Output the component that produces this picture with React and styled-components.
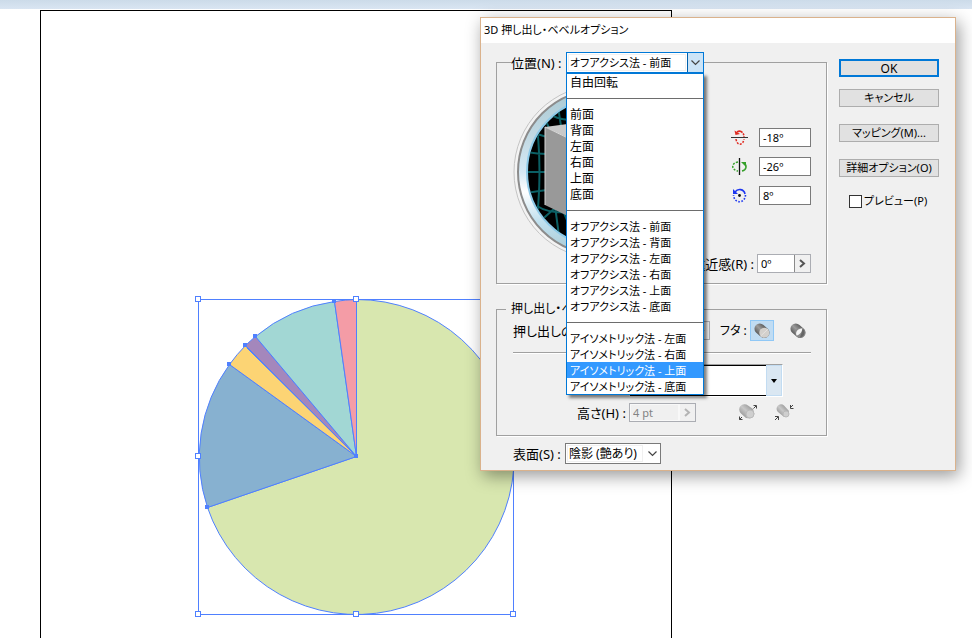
import { useState } from 'react'
import styled, { createGlobalStyle } from 'styled-components'

const GlobalStyle = createGlobalStyle`
    * {
        box-sizing: border-box;
    }
    body {
        margin: 0;
        background: #fff;
        color: #000;
        font-family: "Noto Sans", "Noto Sans CJK JP", sans-serif;
        font-size: 12px;
        line-height: 16px;
        font-feature-settings: "palt";
    }
    button, input, select {
        font: inherit;
        font-feature-settings: inherit;
        color: inherit;
        margin: 0;
    }
`

const Workspace = styled.main`
    position: relative;
    display: flex;
    flex-direction: column;
    height: 100vh;
    min-height: 480px;
    overflow: hidden;
`

const AppBar = styled.div`
    flex: none;
    height: 9px;
    background: linear-gradient(#ccdbe9, #d9e5f2);
`

const Artboard = styled.section`
    flex: 1;
    margin: 1px 300px 0 40px;
    border: 1px solid #000;
    border-bottom: none;
`

const PieChart = styled.svg`
    position: absolute;
    left: 192px;
    top: 293px;
`

const Dialog = styled.section`
    position: absolute;
    left: 480px;
    right: 16px;
    top: 17px;
    min-width: 476px;
    background: #f0f0f0;
    border: 1px solid #dab28c;
    box-shadow: 3px 5px 16px rgba(0, 0, 0, 0.4);
`

const TitleBar = styled.h1`
    height: 25px;
    margin: 0;
    padding: 0 3px;
    background: #fff;
    font-size: 11px;
    font-weight: 400;
    line-height: 23px;
`

const DialogBody = styled.form`
    display: flex;
    gap: 12px;
    padding: 9px 16px 6px 15px;
`

const Settings = styled.div`
    flex: 1;
    min-width: 0;
`

const Group = styled.fieldset`
    min-width: 0;
    margin: 0 0 ${({ $gap }) => $gap}px;
    padding: ${({ $top }) => $top}px 15px ${({ $bottom }) => $bottom}px 16px;
    border: 1px solid #a0a0a0;
    box-shadow: 1px 1px 0 #fff;
`

const GroupLegend = styled.legend`
    display: flex;
    align-items: center;
    height: ${({ $height }) => $height}px;
    margin-left: -${({ $inset }) => $inset}px;
    padding: 0 0 0 ${({ $inset }) => $inset - 2}px;
    background: #f0f0f0;
`

const Label = styled.label`
    flex: none;
    width: ${({ $width }) => ($width ? `${$width}px` : 'auto')};
    font-size: 13px;
    white-space: nowrap;
`

const Combo = styled.div`
    position: relative;
    width: ${({ $width }) => $width}px;
`

const SelectBox = styled.div`
    display: flex;
    height: 21px;
    background: #fff;
    border: 1px solid ${({ $open }) => ($open ? '#0078d7' : '#7a7a7a')};
`

const Select = styled.select`
    flex: 1;
    min-width: 0;
    padding: 0 2px;
    border: 1px solid #fff;
    background: #fff;
    box-shadow: inset 0 0 0 1px #f0f0f0;
    appearance: none;
    outline: none;
    font-size: ${({ $small }) => ($small ? 11 : 12)}px;
    line-height: 16px;
`

const SelectArrow = styled.span`
    display: flex;
    align-items: center;
    justify-content: center;
    width: 16px;
    color: #444;
    background: ${({ $open }) => ($open ? '#cce4f7' : '#fff')};
    border-left: 1px solid ${({ $open }) => ($open ? '#0060ac' : '#fff')};
`

const Menu = styled.ul`
    position: absolute;
    z-index: 2;
    top: 100%;
    left: 0;
    right: 0;
    margin: 0;
    padding: 0;
    list-style: none;
    background: #fff;
    border: 1px solid #0078d7;
    box-shadow: 3px 3px 3px rgba(0, 0, 0, 0.5);
`

const MenuItem = styled.li`
    height: 16px;
    padding: 0 3px;
    font-size: ${({ $small }) => ($small ? 11 : 12)}px;
    line-height: 18px;
    white-space: nowrap;
    cursor: default;
    color: ${({ $active }) => ($active ? '#fff' : '#000')};
    background: ${({ $active }) => ($active ? '#3399ff' : 'transparent')};
`

const MenuSeparator = styled.li`
    height: 1px;
    margin: 8px 0 7px;
    background: #6d6d6d;
`

const RotationArea = styled.div`
    display: flex;
    justify-content: space-between;
`

const RotationFields = styled.div`
    display: flex;
    flex-direction: column;
    align-items: flex-end;
    gap: 10px;
    padding-top: 44px;
`

const FieldRow = styled.div`
    display: flex;
    align-items: center;
    gap: ${({ $gap }) => $gap || 0}px;
    margin-top: ${({ $top }) => $top || 0}px;
    padding-left: ${({ $indent }) => $indent || 0}px;
`

const AngleLabel = styled.label`
    display: flex;
    align-items: center;
    gap: 11px;
`

const AngleInput = styled.input`
    width: 52px;
    height: 19px;
    padding: 0 3px;
    border: 1px solid #7a7a7a;
    background: #fff;
    font-size: 11px;
`

const Stepper = styled.div`
    display: flex;
    width: ${({ $width }) => $width}px;
    height: 19px;
    border: 1px solid #abadb3;
    color: ${({ $muted }) => ($muted ? '#838383' : '#000')};
`

const StepperInput = styled.input`
    flex: 1;
    min-width: 0;
    padding: 0 3px;
    border: none;
    background: #fff;
    font-size: 11px;
    &:disabled {
        background: #f0f0f0;
        box-shadow: inset 0 0 0 1px #f8f8f8;
    }
`

const StepperButton = styled.button`
    display: flex;
    align-items: center;
    justify-content: center;
    width: 16px;
    padding: 0;
    border: none;
    border-left: 1px solid #8a8a8a;
    background: #f0f0f0;
    color: #555;
    &:disabled {
        border-color: #f8f8f8;
        color: #b4b4b4;
    }
`

const Divider = styled.hr`
    height: 2px;
    margin: 11px 0 10px;
    border: none;
    border-top: 1px solid #a0a0a0;
    background: #fff;
`

const CapGroup = styled.div`
    display: flex;
    align-items: center;
    gap: 12px;
    padding-left: 10px;
`

const CapLabel = styled.span`
    width: 28px;
    margin-right: -10px;
    white-space: nowrap;
`

const CapButton = styled.button`
    display: flex;
    align-items: center;
    justify-content: center;
    width: 24px;
    height: 21px;
    padding: 0;
    border: 1px solid ${({ $pressed }) => ($pressed ? '#90c8f6' : 'transparent')};
    background: ${({ $pressed }) => ($pressed ? '#c0dcf3' : 'transparent')};
`

const BevelPicker = styled.button`
    display: flex;
    width: 154px;
    height: 33px;
    padding: 0;
    border: 1px solid #fff;
    border-top-color: #a0a0a0;
    background: #f0f0f0;
`

const BevelSample = styled.span`
    flex: 1;
    align-self: stretch;
    background: #fff;
    border: 1px solid #000;
    border-right: none;
`

const BevelArrow = styled.span`
    display: flex;
    align-items: center;
    justify-content: center;
    align-self: stretch;
    width: 16px;
    background: #dae7f2;
    border: 1px solid #c2dcf2;
`

const Actions = styled.div`
    flex: none;
    display: flex;
    flex-direction: column;
    width: 100px;
    padding-top: 7px;
    font-size: 11px;
`

const ActionButton = styled.button`
    height: 18px;
    margin-bottom: ${({ $gap }) => $gap}px;
    padding: 0;
    border: ${({ $primary }) => ($primary ? '2px solid #0078d7' : '1px solid #adadad')};
    background: #e1e1e1;
    font-size: ${({ $primary }) => ($primary ? 12 : 11)}px;
    line-height: 16px;
    white-space: nowrap;
`

const PreviewOption = styled.label`
    display: flex;
    align-items: center;
    gap: 2px;
    padding-left: 10px;
    white-space: nowrap;
`

const Checkbox = styled.input`
    appearance: none;
    width: 13px;
    height: 13px;
    border: 1px solid #333;
    background: #fff;
    &:checked {
        background: #0078d7;
    }
`

const positions = [
    ['自由回転'],
    ['前面', '背面', '左面', '右面', '上面', '底面'],
    [
        'オフアクシス法 - 前面',
        'オフアクシス法 - 背面',
        'オフアクシス法 - 左面',
        'オフアクシス法 - 右面',
        'オフアクシス法 - 上面',
        'オフアクシス法 - 底面',
    ],
    [
        'アイソメトリック法 - 左面',
        'アイソメトリック法 - 右面',
        'アイソメトリック法 - 上面',
        'アイソメトリック法 - 底面',
    ],
]

const slices = [
    { color: '#d8e7af', from: [164.5, 6.5], to: [15.5, 214.5], large: 1 },
    { color: '#87b1d0', from: [15.5, 214.5], to: [37.5, 71.5], large: 0 },
    { color: '#fcd474', from: [37.5, 71.5], to: [53.5, 52.5], large: 0 },
    { color: '#a487bc', from: [53.5, 52.5], to: [63.5, 43.5], large: 0 },
    { color: '#a2d7d4', from: [63.5, 43.5], to: [142.5, 8.5], large: 0 },
    { color: '#f49ca6', from: [142.5, 8.5], to: [164.5, 6.5], large: 0 },
]

const handles = [
    [6.5, 6.5], [164.5, 6.5], [6.5, 163.5],
    [6.5, 321.5], [164.5, 321.5], [321.5, 321.5],
]

function Pie() {
    return (
        <PieChart width="328" height="328" viewBox="0 0 328 328" role="img" aria-label="円グラフ">
            <g stroke="#4f80ff" strokeWidth="1">
                {slices.map(({ color, from, to, large }) => (
                    <path
                        key={color}
                        fill={color}
                        d={`M164.5 163.5L${from[0]} ${from[1]}A157.5 157.5 0 ${large} 1 ${to[0]} ${to[1]}Z`}
                    />
                ))}
                <path d="M54.5 54.5L164.5 163.5" />
                <rect x="6.5" y="6.5" width="315" height="315" fill="none" />
            </g>
            {slices.map(({ color, to }) => (
                <rect key={color} x={to[0] - 2.5} y={to[1] - 2.5} width="4" height="4" fill="#4f80ff" />
            ))}
            <rect x="162" y="161" width="4" height="4" fill="#4f80ff" />
            {handles.map(([x, y]) => (
                <rect key={`${x}-${y}`} x={x - 3} y={y - 3} width="5" height="5" fill="#fff" stroke="#4f80ff" />
            ))}
        </PieChart>
    )
}

function TrackCube() {
    return (
        <svg width="176" height="176" viewBox="0 0 176 176" aria-hidden="true">
            <defs>
                <linearGradient id="ring" x1="0" y1="0" x2="0" y2="1">
                    <stop offset="0" stopColor="#a9c9d3" />
                    <stop offset="0.3" stopColor="#c3dae4" />
                    <stop offset="0.5" stopColor="#d5e8f4" />
                    <stop offset="0.62" stopColor="#ffffff" />
                    <stop offset="0.8" stopColor="#c0e0ee" />
                    <stop offset="1" stopColor="#a9c9d3" />
                </linearGradient>
                <clipPath id="globe"><circle cx="88" cy="88" r="73" /></clipPath>
            </defs>
            <circle cx="88" cy="88" r="87" fill="#f3f3f3" stroke="#c4c4c4" />
            <circle cx="88" cy="88" r="83" fill="url(#ring)" stroke="#8c8c8c" strokeWidth="2" />
            <circle cx="88" cy="88" r="74" fill="#000" stroke="#8ecae8" strokeWidth="2" />
            <g clipPath="url(#globe)" fill="none" stroke="#0b5f64" strokeWidth="2">
                <path d="M22 26Q31 88 22 150M14 88H162M14 68Q24 70 34 70M14 109Q24 107 34 106" />
                <path d="M24 50L34 53M24 122Q36 130 60 128M24 140L42 124M46 152L42 122M60 150L48 122" />
                <path d="M30 30L36 44M40 32Q48 36 60 36M44 16L48 42M56 14L54 42" />
                <path d="M88 14V162M104 14Q120 88 104 162M130 20Q150 88 130 156" />
            </g>
            <path d="M32 43L92 35L146 52L88 70Z" fill="#c9c9c9" />
            <path d="M32 43L88 70V148L32 121Z" fill="#999" />
            <path d="M88 70L146 52V128L88 148Z" fill="#777" />
            <path d="M32 121V43L88 70" fill="none" stroke="#d8d8d8" />
        </svg>
    )
}

function RotateIcon({ axis }) {
    if (axis === 'x') {
        return (
            <svg width="17" height="19" viewBox="0 0 17 19" fill="none" aria-hidden="true">
                <path d="M6 4C9 2 13 4 13 9" stroke="#e02a20" strokeWidth="1.6" strokeDasharray="6 1 2 1" />
                <path d="M3.500 2.500L4.500 7L9 6Z" fill="#e02a20" />
                <path d="M5 11C6 18 12 18 13 11" stroke="#e02a20" strokeWidth="1.5" strokeDasharray="2 1.4" />
                <path d="M0 9.5H17" stroke="#333" />
            </svg>
        )
    }
    if (axis === 'y') {
        return (
            <svg width="17" height="19" viewBox="0 0 17 19" fill="none" aria-hidden="true">
                <path d="M11 14C16 13 16 8 13 6" stroke="#35a02a" strokeWidth="1.5" />
                <path d="M10 5H15V10Z" fill="#35a02a" />
                <path d="M7 5C0 6 0 13 7 14" stroke="#35a02a" strokeWidth="1.5" strokeDasharray="2 1.4" />
                <path d="M8.5 1V18" stroke="#111" strokeWidth="1.3" />
            </svg>
        )
    }
    return (
        <svg width="17" height="19" viewBox="0 0 17 19" fill="none" aria-hidden="true">
            <path d="M4 6C7 2 13 3 14 8" stroke="#1c36f0" strokeWidth="1.6" />
            <path d="M2 3V8H7Z" fill="#1c36f0" />
            <path d="M14.500 9C14 18 3 18 2.500 9" stroke="#1c36f0" strokeWidth="1.6" strokeDasharray="1.6 1.6" />
            <circle cx="8.500" cy="9.500" r="1.400" fill="#111" />
        </svg>
    )
}

function CapIcon({ hollow }) {
    const id = hollow ? 'cap-hollow' : 'cap-solid'
    return (
        <svg width="16" height="16" viewBox="0 0 16 16" aria-hidden="true">
            <defs>
                <linearGradient id={id} x1="0" y1="1" x2="1" y2="0">
                    <stop offset="0.1" stopColor="#3c3c3c" />
                    <stop offset="0.5" stopColor="#9c9c9c" />
                    <stop offset="0.9" stopColor="#3c3c3c" />
                </linearGradient>
            </defs>
            <path d="M2 9.500A5.300 5.300 0 0 1 9.500 2L14 6A5.300 5.300 0 0 1 6.500 13.500Z" fill={`url(#${id})`} />
            <circle cx="10.300" cy="9.800" r="5" fill={hollow ? '#8a8a8a' : '#d3d0cc'} />
            {!hollow && <path d="M6.500 13.200L13.800 6.200" stroke="#e6e3e0" strokeWidth="1" />}
            {hollow && <path d="M6.500 12.500C5 9 8 5 12.500 5.500C12 8.500 10 12 6.500 12.500Z" fill="#f4f4f4" />}
            {hollow && <path d="M12.500 5.500C16 8 15 14 10 14.500C11 11 12 10 12.500 5.500Z" fill="#666" />}
        </svg>
    )
}

function BevelIcon({ outward }) {
    const id = outward ? 'bevel-out' : 'bevel-in'
    return (
        <svg width="20" height="17" viewBox="0 0 20 17" aria-hidden="true">
            <defs>
                <linearGradient id={id} x1="0" y1="1" x2="1" y2="0">
                    <stop offset="0.1" stopColor="#8c8c8c" />
                    <stop offset="0.5" stopColor="#c8c8c8" />
                    <stop offset="0.9" stopColor="#8c8c8c" />
                </linearGradient>
            </defs>
            <path
                d={outward
                    ? 'M3 9.500A5 5 0 0 1 10 1.500L15 5L16.500 10L12 14.500L8 14Z'
                    : 'M4 8A4 4 0 0 1 10 1.500L15 7L14 12L10 13Z'}
                fill={`url(#${id})`}
            />
            <circle cx="12" cy="10" r={outward ? 4 : 3} fill="#cfcfcf" stroke="#bababa" />
            <g fill="none" stroke="#444">
                <path d={outward ? 'M15.500 4.500L18 2M15.500 1.500H18.500V4.500' : 'M19 1L16 4M16.500 1V4.500H19.500'} />
                <path d={outward ? 'M4 13L1.500 15.500M1.500 12.500V15.500H4.500' : 'M1 16L4 13M1 12.500H4.500V16'} />
            </g>
        </svg>
    )
}

function ChevronDown() {
    return (
        <svg width="9" height="6" viewBox="0 0 9 6" fill="none" stroke="currentColor" aria-hidden="true">
            <path d="M0.500 0.500L4.500 4.500L8.500 0.500" strokeWidth="1.200" />
        </svg>
    )
}

function ChevronRight() {
    return (
        <svg width="7" height="9" viewBox="0 0 7 9" fill="none" stroke="currentColor" aria-hidden="true">
            <path d="M1 1L5 4.500L1 8" strokeWidth="2" />
        </svg>
    )
}

function PositionSelect() {
    const [value, setValue] = useState('オフアクシス法 - 前面')
    const [active, setActive] = useState('アイソメトリック法 - 上面')

    return (
        <Combo $width={138}>
            <SelectBox $open>
                <Select id="position" $small value={value} onChange={(e) => setValue(e.target.value)}>
                    {positions.flat().map((name) => <option key={name}>{name}</option>)}
                </Select>
                <SelectArrow $open><ChevronDown /></SelectArrow>
            </SelectBox>
            <Menu role="listbox" aria-label="位置">
                {positions.map((group, index) => [
                    index > 0 && <MenuSeparator key={`separator-${index}`} role="separator" />,
                    ...group.map((name) => (
                        <MenuItem
                            key={name}
                            role="option"
                            aria-selected={name === active}
                            $active={name === active}
                            $small={name.length > 4}
                            onMouseEnter={() => setActive(name)}
                            onClick={() => setValue(name)}
                        >
                            {name}
                        </MenuItem>
                    )),
                ])}
            </Menu>
        </Combo>
    )
}

function AngleField({ axis, name, value }) {
    return (
        <AngleLabel>
            <RotateIcon axis={axis} />
            <AngleInput aria-label={name} defaultValue={value} />
        </AngleLabel>
    )
}

function StepperField({ id, value, width, disabled, label }) {
    return (
        <Stepper $width={width} $muted={disabled}>
            <StepperInput id={id} defaultValue={value} disabled={disabled} />
            <StepperButton type="button" disabled={disabled} aria-label={label}><ChevronRight /></StepperButton>
        </Stepper>
    )
}

function ExtrudeDialog() {
    return (
        <Dialog role="dialog" aria-labelledby="dialog-title">
            <TitleBar id="dialog-title">3D 押し出し・ベベルオプション</TitleBar>
            <DialogBody onSubmit={(e) => e.preventDefault()}>
                <Settings>
                    <Group $gap={16} $top={11} $bottom={10}>
                        <GroupLegend $height={21} $inset={2}>
                            <Label htmlFor="position" $width={55}>位置(N) :</Label>
                            <PositionSelect />
                        </GroupLegend>
                        <RotationArea>
                            <TrackCube />
                            <RotationFields>
                                <AngleField axis="x" name="X軸" value="-18º" />
                                <AngleField axis="y" name="Y軸" value="-26º" />
                                <AngleField axis="z" name="Z軸" value="8º" />
                                <FieldRow $gap={3} $top={39}>
                                    <Label htmlFor="perspective">遠近感(R) :</Label>
                                    <StepperField id="perspective" value="0º" width={54} label="遠近感を調整" />
                                </FieldRow>
                            </RotationFields>
                        </RotationArea>
                    </Group>
                    <Group $gap={7} $top={2} $bottom={13}>
                        <GroupLegend $height={18} $inset={7}>押し出し・ベベル</GroupLegend>
                        <FieldRow>
                            <Label htmlFor="depth" $width={130}>押し出しの奥行き(D) :</Label>
                            <StepperField id="depth" value="50 pt" width={67} label="奥行きを調整" />
                            <CapGroup>
                                <CapLabel>フタ :</CapLabel>
                                <CapButton type="button" $pressed aria-label="フタあり"><CapIcon /></CapButton>
                                <CapButton type="button" aria-label="フタなし"><CapIcon hollow /></CapButton>
                            </CapGroup>
                        </FieldRow>
                        <Divider />
                        <FieldRow $indent={116}>
                            <BevelPicker type="button" aria-label="ベベル">
                                <BevelSample />
                                <BevelArrow>
                                    <svg width="6" height="4" viewBox="0 0 6 4" aria-hidden="true">
                                        <path d="M0 0H6L3 4Z" />
                                    </svg>
                                </BevelArrow>
                            </BevelPicker>
                        </FieldRow>
                        <FieldRow $indent={64} $top={6}>
                            <Label htmlFor="height" $width={52}>高さ(H) :</Label>
                            <StepperField id="height" value="4 pt" width={67} disabled label="高さを調整" />
                            <FieldRow $indent={42} $gap={16}>
                                <BevelIcon outward />
                                <BevelIcon />
                            </FieldRow>
                        </FieldRow>
                    </Group>
                    <FieldRow $indent={17}>
                        <Label htmlFor="surface" $width={52}>表面(S) :</Label>
                        <Combo $width={96}>
                            <SelectBox>
                                <Select id="surface" defaultValue="陰影 (艶あり)">
                                    <option>陰影 (艶あり)</option>
                                    <option>陰影 (艶なし)</option>
                                    <option>ワイヤーフレーム</option>
                                </Select>
                                <SelectArrow><ChevronDown /></SelectArrow>
                            </SelectBox>
                        </Combo>
                    </FieldRow>
                </Settings>
                <Actions>
                    <ActionButton type="submit" $primary $gap={12}>OK</ActionButton>
                    <ActionButton type="button" $gap={17}>キャンセル</ActionButton>
                    <ActionButton type="button" $gap={17}>マッピング(M)...</ActionButton>
                    <ActionButton type="button" $gap={16}>詳細オプション(O)</ActionButton>
                    <PreviewOption>
                        <Checkbox type="checkbox" />
                        プレビュー(P)
                    </PreviewOption>
                </Actions>
            </DialogBody>
        </Dialog>
    )
}

function App() {
    return (
        <>
            <GlobalStyle />
            <Workspace>
                <AppBar />
                <Artboard />
                <Pie />
                <ExtrudeDialog />
            </Workspace>
        </>
    )
}

export default App
